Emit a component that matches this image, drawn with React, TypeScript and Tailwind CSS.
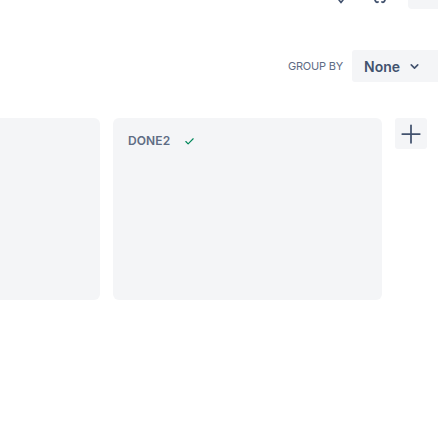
import { Check, ChevronDown, Plus } from 'lucide-react';

function Column({ title, done, width }: { title?: string; done?: boolean; width: string }) {
  return (
    <div className={`${width} h-[182px] shrink-0 rounded-md bg-[#f4f5f7]`}>
      {title && (
        <div className="flex items-center gap-[14px] pl-[15px] pt-[16px]">
          <span className="text-[12px] font-semibold uppercase leading-[14px] tracking-[0.1px] text-[#5e6c84]">
            {title}
          </span>
          {done && <Check className="h-[11px] w-[11px] text-[#00875a]" strokeWidth={2.5} />}
        </div>
      )}
    </div>
  );
}

export default function App() {
  return (
    <div className="h-[432px] w-[438px] overflow-hidden bg-white font-['Inter',sans-serif]">
      {/* clipped header toolbar */}
      <div className="flex h-[9px] items-start justify-end overflow-hidden">
        <svg width="6" height="4" viewBox="0 0 6 4" className="mr-[30px] mt-0">
          <path d="M1 0 L3 2.5 L5 0" stroke="#42526e" strokeWidth="1.6" fill="none" strokeLinecap="round" />
        </svg>
        <svg width="12" height="4" viewBox="0 0 12 4" className="mr-[22px]">
          <path d="M1 0 Q2 3 4 2 M8 2 Q10 3 11 0" stroke="#42526e" strokeWidth="1.8" fill="none" strokeLinecap="round" />
        </svg>
        <div className="h-[9px] w-[30px] rounded-bl-[4px] bg-[#f4f5f7]" />
      </div>

      {/* group by */}
      <div className="mt-[41px] flex items-center justify-end gap-[9px]">
        <span className="text-[11px] uppercase tracking-[-0.2px] text-[#5e6c84]">Group by</span>
        <button className="flex h-[32px] w-[86px] items-center gap-[8px] rounded-l-[3px] bg-[#f4f5f7] pl-[12px]">
          <span className="text-[14px] font-semibold text-[#42526e]">None</span>
          <ChevronDown className="h-[13px] w-[13px] text-[#42526e]" strokeWidth={3} />
        </button>
      </div>

      {/* board columns */}
      <div className="ml-[-170px] mt-[36px] flex items-start gap-[13px]">
        <Column width="w-[270px]" />
        <Column width="w-[269px]" title="DONE2" done />
        <button className="flex h-[31px] w-[32px] shrink-0 items-center justify-center rounded-[3px] bg-[#f4f5f7]">
          <Plus className="h-[30px] w-[30px] text-[#42526e]" strokeWidth={1.4} />
        </button>
      </div>
    </div>
  );
}
